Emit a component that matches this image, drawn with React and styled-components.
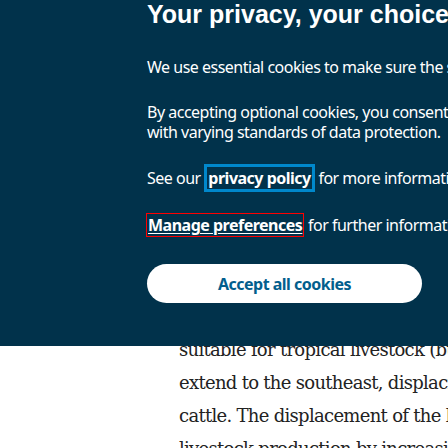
import React from "react";
import styled, { createGlobalStyle } from "styled-components";

const GlobalStyle = createGlobalStyle`
  html, body {
    margin: 0;
    padding: 0;
    overflow: hidden;
    background: #ffffff;
  }
`;

const Page = styled.div`
  position: relative;
  width: 448px;
  height: 448px;
  overflow: hidden;
  background: #ffffff;
`;

const Article = styled.div`
  padding: 333px 0 0 179px;
  font-family: "DejaVu Serif", "Liberation Serif", serif;
  font-size: 18px;
  line-height: 33px;
  letter-spacing: -0.7px;
  color: #222222;
`;

const ArticleLine = styled.div`
  white-space: nowrap;
`;

const Banner = styled.section`
  position: absolute;
  top: 0;
  left: 0;
  width: 100%;
  height: 346px;
  box-sizing: border-box;
  background: #01324b;
  padding: 0 0 0 147px;
  color: #ffffff;
  font-family: "Noto Sans", "Open Sans", sans-serif;
  font-size: 16px;
  line-height: 20px;
  display: flex;
  flex-direction: column;
  align-items: flex-start;
`;

const Title = styled.h2`
  margin: 0;
  font-family: "Liberation Sans", Arial, sans-serif;
  font-weight: 700;
  font-size: 25px;
  line-height: 29px;
  white-space: nowrap;
`;

const Text = styled.p`
  margin: ${(p) => p.$top}px 0 0;
  white-space: nowrap;
  letter-spacing: -0.5px;
`;

const FocusLink = styled.a`
  color: #ffffff;
  font-weight: 700;
  text-decoration: none;
  border: 3px solid #0088cc;
  padding: 0 1px;
`;

const ManageLink = styled.a`
  color: #ffffff;
  font-weight: 700;
  text-decoration: underline;
  text-underline-offset: 2px;
  border: 1px solid #ff0000;
  padding: 0 1px;
  margin-left: -1px;
`;

const AcceptButton = styled.button`
  margin-top: 29px;
  width: 275px;
  height: 39px;
  border: none;
  border-radius: 20px;
  background: #ffffff;
  color: #025e8d;
  font-family: "Noto Sans", "Open Sans", sans-serif;
  font-weight: 700;
  font-size: 16px;
  letter-spacing: -0.5px;
  cursor: pointer;
`;

export default function App() {
  return (
    <>
      <GlobalStyle />
      <Page>
        <Article>
          <ArticleLine>suitable for tropical livestock (buffalo and zebu) would</ArticleLine>
          <ArticleLine>extend to the southeast, displacing temperate breeds of</ArticleLine>
          <ArticleLine>cattle. The displacement of the latter could affect</ArticleLine>
          <ArticleLine>livestock production by increasing the costs of</ArticleLine>
        </Article>
        <Banner>
          <Title>Your privacy, your choices</Title>
          <Text $top={28}>
            We use essential cookies to make sure the site can function. We also use optional cookies for advertising.
          </Text>
          <Text $top={25}>
            By accepting optional cookies, you consent to the processing of your personal data
            <br />
            with varying standards of data protection.
          </Text>
          <Text $top={26}>
            See our <FocusLink href="#">privacy policy</FocusLink> for more information on the use of your personal data.
          </Text>
          <Text $top={27}>
            <ManageLink href="#">Manage preferences</ManageLink> for further information and to change your choices.
          </Text>
          <AcceptButton>Accept all cookies</AcceptButton>
        </Banner>
      </Page>
    </>
  );
}
